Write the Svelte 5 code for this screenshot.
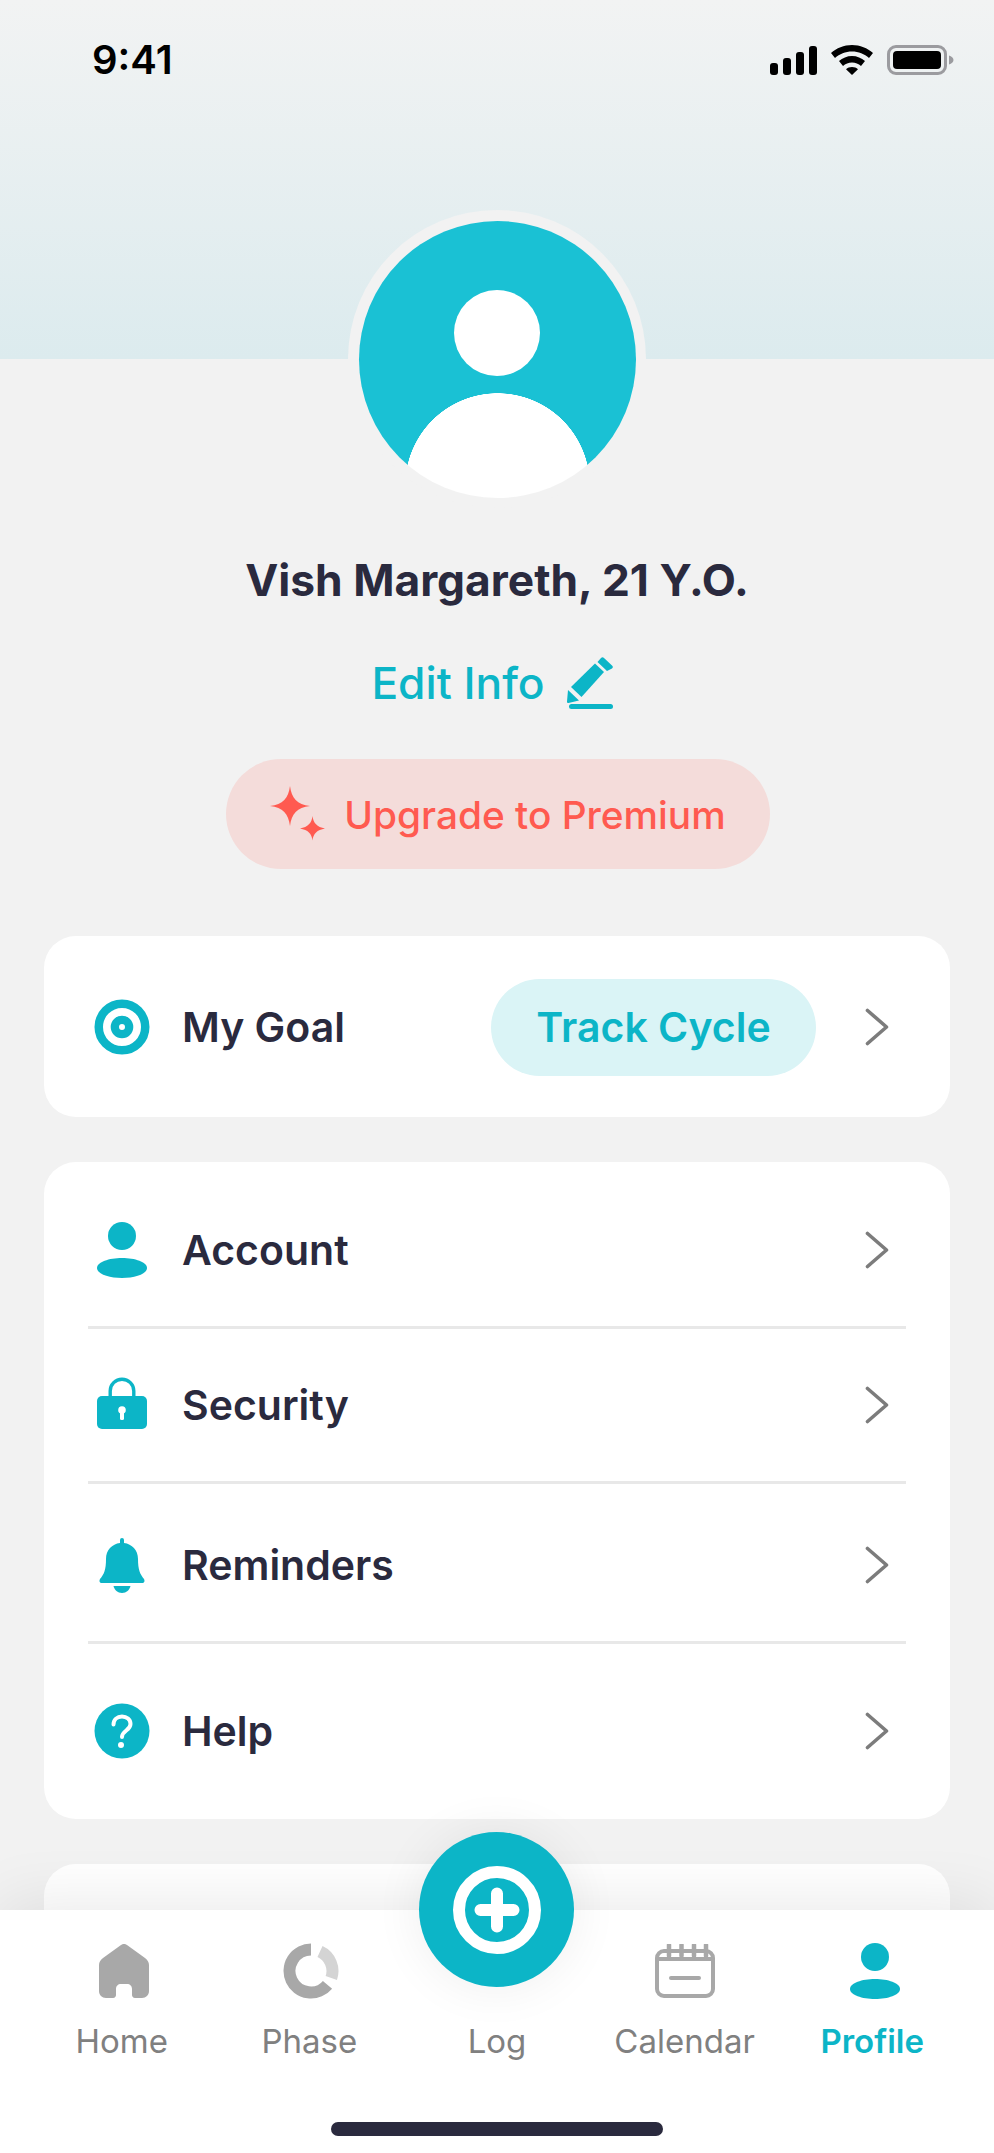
<script>
  const rows = [
    { key: 'account', label: 'Account' },
    { key: 'security', label: 'Security' },
    { key: 'reminders', label: 'Reminders' },
    { key: 'help', label: 'Help' }
  ];
  const tabs = [
    { key: 'home', label: 'Home' },
    { key: 'phase', label: 'Phase' },
    { key: 'log', label: 'Log' },
    { key: 'calendar', label: 'Calendar' },
    { key: 'profile', label: 'Profile' }
  ];
</script>

{#snippet person()}
  <svg class="ic" width="56" height="56" viewBox="0 0 56 56" aria-hidden="true">
    <circle cx="28" cy="14" r="14" fill="#0cb5c7" />
    <path d="M3 46C3 40 15 36 28 36s25 4 25 10c0 6-12 10-25 10S3 52 3 46Z" fill="#0cb5c7" />
  </svg>
{/snippet}

{#snippet chevron()}
  <svg class="chev" width="26" height="38" viewBox="0 0 26 38" aria-hidden="true">
    <path d="M3.500 2.500 22.500 19 3.500 35.500" fill="none" stroke="#7c7c7c" stroke-width="3.600" stroke-linecap="round" stroke-linejoin="round" />
  </svg>
{/snippet}

<div class="screen">
  <header class="top">
    <div class="status">
      <span class="time">9:41</span>
      <div class="status-icons">
        <svg width="47" height="29" viewBox="0 0 47 29" aria-hidden="true">
          <rect x="0" y="17" width="8" height="12" rx="3" />
          <rect x="13" y="12" width="8" height="17" rx="3" />
          <rect x="26" y="6" width="8" height="23" rx="3" />
          <rect x="39" y="0" width="8" height="29" rx="3" />
        </svg>
        <svg class="wifi" width="42" height="30" viewBox="0 0 42 30" aria-hidden="true">
          <path d="M21 0c8 0 15.500 3 21 8l-4 5c-4.500-4-10.500-6.500-17-6.500S8.500 9 4 13L0 8C5.500 3 13 0 21 0Z" />
          <path d="M21 11c5 0 9.500 2 13 5l-4 5c-2.400-2-5.500-3.400-9-3.400S14.400 19 12 21l-4-5c3.500-3 8-5 13-5Z" />
          <path d="M21 22c2.400 0 4.500.8 6 2.200L21 30l-6-5.800c1.500-1.400 3.600-2.200 6-2.200Z" />
        </svg>
        <svg class="batt" width="67" height="30" viewBox="0 0 67 30" aria-hidden="true">
          <rect x="1.500" y="1.500" width="57" height="27" rx="7.500" fill="none" stroke="#9b9b9f" stroke-width="3" />
          <rect x="6" y="6" width="48" height="18" rx="4" fill="#000" />
          <path d="M62 10.500c2.500.6 4.500 2.400 4.500 4.500s-2 3.900-4.500 4.500Z" fill="#9b9b9f" />
        </svg>
      </div>
    </div>
  </header>

  <section class="profile">
    <div class="avatar-ring">
      <div class="avatar">
        <span class="head"></span>
      </div>
    </div>
    <h1 class="name">Vish Margareth, 21 Y.O.</h1>
    <div class="edit">
      <span>Edit Info</span>
      <svg width="46" height="52" viewBox="0 0 46 52" aria-hidden="true">
        <path d="M4 30 28 6.500 37 15 14.500 40Z" fill="#0cb5c7" />
        <path d="M30.500 5 34 1a2 2 0 0 1 3 0l8 7.500a2 2 0 0 1 0 3L40 14Z" fill="#0cb5c7" />
        <path d="M1 33 12 43.500 1.500 46A1.300 1.300 0 0 1 0 44.500Z" fill="#0cb5c7" />
        <rect x="2" y="47" width="44" height="5" rx="2.500" fill="#0cb5c7" />
      </svg>
    </div>
    <div class="premium">
      <svg width="56" height="56" viewBox="0 0 56 56" aria-hidden="true">
        <path d="M20 0C21.500 12 27 18.500 40 20 27 21.500 21.500 28 20 40 18.500 28 13 21.500 0 20 13 18.500 18.500 12 20 0Z" fill="#ff5a50" />
        <path d="M42.500 30C43.300 37 47 41 55 42.500 47 44 43.300 47.500 42.500 54.500 41.700 47.500 38 44 30 42.500 38 41 41.700 37 42.500 30Z" fill="#ff5a50" />
      </svg>
      <span>Upgrade to Premium</span>
    </div>
  </section>

  <section class="cards">
    <div class="card goal">
      <div class="row">
        <span class="icon">
          <svg width="56" height="56" viewBox="0 0 56 56" aria-hidden="true">
            <circle cx="28" cy="28" r="23.250" fill="none" stroke="#0cb5c7" stroke-width="8.500" />
            <circle cx="28" cy="28" r="7.150" fill="none" stroke="#0cb5c7" stroke-width="8.300" />
          </svg>
        </span>
        <span class="label">My Goal</span>
        <span class="pill">Track Cycle</span>
        {@render chevron()}
      </div>
    </div>

    <div class="card list">
      {#each rows as row}
        <div class="row {row.key}">
          <span class="icon">
            {#if row.key === 'account'}
              {@render person()}
            {:else if row.key === 'security'}
              <svg width="56" height="56" viewBox="0 0 56 56" aria-hidden="true">
                <path d="M16.200 22v-8a11.800 11.800 0 0 1 23.600 0v8" fill="none" stroke="#0cb5c7" stroke-width="3.400" />
                <rect x="3" y="19" width="50" height="33" rx="5" fill="#0cb5c7" />
                <circle cx="28" cy="33" r="3.800" fill="#fff" />
                <rect x="26" y="34" width="4" height="9" rx="1.500" fill="#fff" />
              </svg>
            {:else if row.key === 'reminders'}
              <svg width="56" height="56" viewBox="0 0 56 56" aria-hidden="true">
                <path d="M26 3a2 2 0 0 1 4 0v3c8 1 14 7 14 16 0 11 2 15 6 20 1 2 .5 4-2 4H8c-2.500 0-3-2-2-4 4-5 6-9 6-20 0-9 6-15 14-16Z" fill="#0cb5c7" />
                <path d="M19.500 49h17c-1 4-4 7-8.500 7s-7.500-3-8.500-7Z" fill="#0cb5c7" />
              </svg>
            {:else}
              <svg width="56" height="56" viewBox="0 0 56 56" aria-hidden="true">
                <circle cx="28" cy="28" r="27.500" fill="#0cb5c7" />
                <path d="M19.500 21.500c0-5 3.800-8 8.500-8s8.500 3 8.500 7.500c0 6.500-8.500 6.500-8.500 13" fill="none" stroke="#fff" stroke-width="4" stroke-linecap="round" />
                <circle cx="27" cy="42" r="3" fill="#fff" />
              </svg>
            {/if}
          </span>
          <span class="label">{row.label}</span>
          {@render chevron()}
        </div>
      {/each}
    </div>

    <div class="card rest"></div>
  </section>

  <nav class="tabbar">
    <div class="fab">
      <svg width="96" height="96" viewBox="0 0 96 96" aria-hidden="true">
        <circle cx="48" cy="48" r="38" fill="none" stroke="#fff" stroke-width="12" />
        <path d="M48 31.500v33M31.500 48h33" fill="none" stroke="#fff" stroke-width="12" stroke-linecap="round" />
      </svg>
    </div>
    {#each tabs as tab}
      <div class="tab {tab.key}" class:active={tab.key === 'profile'}>
        <span class="tab-icon">
          {#if tab.key === 'home'}
            <svg width="50" height="54" viewBox="0 0 50 54" aria-hidden="true">
              <path d="M22 1a5 5 0 0 1 6 0l18 13c2.500 2 4 4 4 7V47c0 4-3 7-7 7h-7c-2 0-3-1.500-3-3v-6c0-3-2-5-5-5h-6c-3 0-5 2-5 5v6c0 1.500-1 3-3 3H7c-4 0-7-3-7-7V21c0-3 1.500-5 4-7Z" fill="#a8a8a8" />
            </svg>
          {:else if tab.key === 'phase'}
            <svg width="56" height="56" viewBox="0 0 56 56" aria-hidden="true">
              <path d="M28 6.500A21.500 21.500 0 1 0 44.500 41.800" fill="none" stroke="#a8a8a8" stroke-width="12" stroke-linecap="butt" />
              <path d="M37 8.500A21.500 21.500 0 0 1 48.300 35" fill="none" stroke="#d4d4d4" stroke-width="12" />
            </svg>
          {:else if tab.key === 'calendar'}
            <svg width="60" height="54" viewBox="0 0 60 54" aria-hidden="true">
              <rect x="2" y="7" width="56" height="45" rx="7" fill="none" stroke="#a8a8a8" stroke-width="4" />
              <path d="M2 15h56" stroke="#a8a8a8" stroke-width="4" />
              <path d="M14 1v11M26.500 1v11M39 1v11M51 1v11" stroke="#a8a8a8" stroke-width="4.500" stroke-linecap="round" />
              <rect x="14" y="32" width="32" height="4" rx="2" fill="#a8a8a8" />
            </svg>
          {:else if tab.key === 'profile'}
            {@render person()}
          {/if}
        </span>
        <span class="tab-label">{tab.label}</span>
      </div>
    {/each}
    <div class="indicator"></div>
  </nav>
</div>

<style>
  :global(body) {
    margin: 0;
    background: #f2f2f2;
  }
  .screen {
    position: relative;
    width: 994px;
    height: 2153px;
    overflow: hidden;
    background: #f2f2f2;
    font-family: Inter, "Liberation Sans", sans-serif;
    color: #2a2a3e;
  }
  .top {
    height: 359px;
    background: linear-gradient(180deg, #f2f3f3 0%, #dcebee 100%);
  }
  .status {
    display: flex;
    align-items: center;
    justify-content: space-between;
    padding: 45px 40px 0 92px;
    height: 30px;
  }
  .time {
    font-size: 40px;
    font-weight: 600;
    line-height: 30px;
    color: #000;
  }
  .status-icons {
    display: flex;
    align-items: center;
    gap: 14px;
  }
  .profile {
    display: flex;
    flex-direction: column;
    align-items: center;
  }
  .avatar-ring {
    width: 298px;
    height: 298px;
    margin-top: -149px;
    border-radius: 50%;
    background: #f2f2f2;
    display: flex;
    align-items: center;
    justify-content: center;
  }
  .avatar {
    position: relative;
    width: 277px;
    height: 277px;
    border-radius: 50%;
    background: radial-gradient(circle 92.500px at 138.500px 264.500px, #fff 99.500%, #1ac1d4 100%);
  }
  .head {
    position: absolute;
    left: 95.500px;
    top: 69px;
    width: 86px;
    height: 86px;
    border-radius: 50%;
    background: #fff;
  }
  .name {
    margin: 44px 0 0;
    font-size: 44.300px;
    line-height: 56px;
    font-weight: 700;
    color: #2a2a3e;
  }
  .edit {
    display: flex;
    align-items: center;
    gap: 22px;
    margin-top: 49px;
    padding-right: 10px;
    height: 52px;
    font-size: 44.300px;
    font-weight: 550;
    color: #0cb5c7;
  }
  .premium {
    display: flex;
    align-items: center;
    justify-content: center;
    gap: 18px;
    width: 544px;
    height: 110px;
    margin: 50px 0 0 2px;
    border-radius: 55px;
    background: #f4dcda;
    color: #ff5a50;
    font-size: 38.800px;
    font-weight: 550;
    box-sizing: border-box;
  }
  .cards {
    display: flex;
    flex-direction: column;
    gap: 45px;
    padding: 67px 44px 0;
  }
  .card {
    background: #fff;
    border-radius: 32px;
  }
  .goal .row { height: 181px; }
  .row {
    display: flex;
    align-items: center;
    margin: 0 44px;
    box-sizing: border-box;
  }
  .icon {
    display: flex;
    align-items: center;
    justify-content: center;
    width: 56px;
    height: 56px;
    margin-left: 5.500px;
    margin-right: 32.500px;
    flex: none;
  }
  .label {
    flex: 1;
    font-size: 41px;
    font-weight: 600;
    color: #2a2a3e;
  }
  .pill {
    display: flex;
    align-items: center;
    justify-content: center;
    width: 325px;
    height: 97px;
    margin-top: 1px;
    border-radius: 49px;
    background: #daf4f6;
    color: #0cb5c7;
    font-size: 41px;
    font-weight: 600;
    margin-right: 48px;
  }
  .chev { flex: none; margin-right: 16px; }
  .list .row { border-bottom: 3px solid #e8e8e8; }
  .list .row:last-child { border-bottom: 0; }
  .account { height: 167px; padding-top: 12px; }
  .security { height: 155px; }
  .reminders { height: 160px; padding-top: 5px; }
  .help { height: 175px; padding-bottom: 1px; }
  .rest { height: 300px; }
  .tabbar {
    position: absolute;
    left: 0;
    right: 0;
    bottom: 0;
    height: 243px;
    box-sizing: border-box;
    padding: 33px 28px 0;
    display: grid;
    grid-template-columns: repeat(5, 1fr);
    align-items: start;
    background: #fff;
    box-shadow: 0 -6px 60px rgba(0, 0, 0, 0.09);
  }
  .tab {
    display: flex;
    flex-direction: column;
    align-items: center;
    gap: 22px;
  }
  .tab-icon {
    display: flex;
    align-items: center;
    justify-content: center;
    height: 56px;
  }
  .home .tab-icon { margin-left: 4px; }
  .phase .tab-icon { margin-left: 3px; }
  .profile .tab-icon { margin-left: 6px; }
  .tab-label {
    font-size: 33px;
    line-height: 40px;
    color: #808080;
  }
  .active .tab-label {
    color: #0cb5c7;
    font-weight: 600;
  }
  .fab {
    position: absolute;
    left: 419px;
    top: -78px;
    width: 155px;
    height: 155px;
    border-radius: 50%;
    background: #0cb5c7;
    display: flex;
    align-items: center;
    justify-content: center;
    box-shadow: 0 0 50px rgba(0, 0, 0, 0.07);
  }
  .indicator {
    position: absolute;
    left: 331px;
    top: 212px;
    width: 332px;
    height: 14px;
    border-radius: 7px;
    background: #2a2a3e;
  }
</style>
